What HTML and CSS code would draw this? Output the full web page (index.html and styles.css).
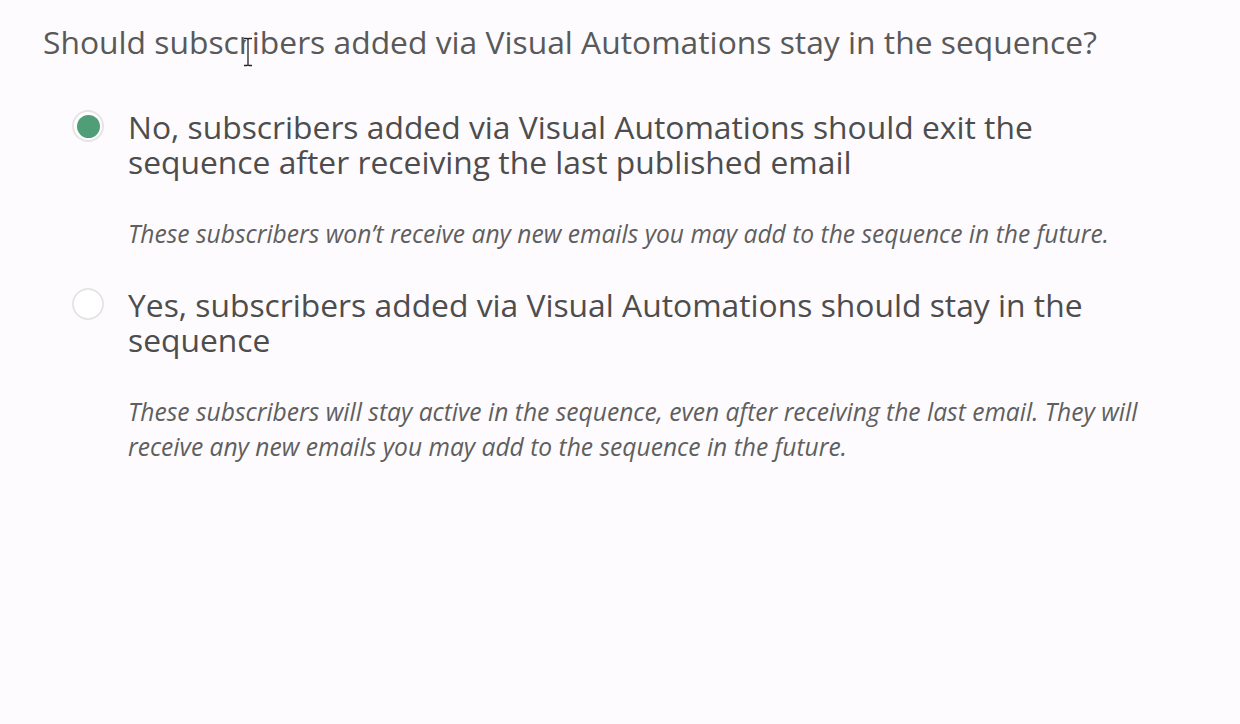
FILE: index.html
```html
<!DOCTYPE html>
<html>
<head>
<meta charset="utf-8">
<link rel="stylesheet" href="styles.css">
</head>
<body>
<div class="page">
  <h1 class="question">Should subscribers added via Visual Automations stay in the sequence?</h1>
  <div class="options">
    <div class="option">
      <span class="radio checked"><span class="dot"></span></span>
      <div class="option-body">
        <div class="label">No, subscribers added via Visual Automations should exit the sequence after receiving the last published email</div>
        <div class="hint">These subscribers won’t receive any new emails you may add to the sequence in the future.</div>
      </div>
    </div>
    <div class="option">
      <span class="radio"></span>
      <div class="option-body">
        <div class="label">Yes, subscribers added via Visual Automations should stay in the sequence</div>
        <div class="hint">These subscribers will stay active in the sequence, even after receiving the last email. They will receive any new emails you may add to the sequence in the future.</div>
      </div>
    </div>
  </div>
</div>
<svg class="cursor" width="12" height="30" viewBox="0 0 12 30">
  <path d="M2 1.5 H5 Q6 1.5 6 3 V27 Q6 28.5 5 28.5 H2 M10 1.5 H7 Q6 1.5 6 3 M6 27 Q6 28.5 7 28.5 H10" fill="none" stroke="#fff" stroke-width="3"/>
  <path d="M2 1.5 H5 Q6 1.5 6 3 V27 Q6 28.5 5 28.5 H2 M10 1.5 H7 Q6 1.5 6 3 M6 27 Q6 28.5 7 28.5 H10" fill="none" stroke="#222" stroke-width="1.3"/>
</svg>
</body>
</html>
```
FILE: styles.css
```css
html, body {
  margin: 0;
  padding: 0;
  background: #fdfbfd;
}
body {
  font-family: "Open Sans", "Noto Sans", sans-serif;
  width: 1240px;
  height: 724px;
  overflow: hidden;
  position: relative;
}
.page {
  padding: 24px 0 0 41px;
}
.question {
  margin: 0 0 0 2px;
  font-size: 31.8px;
  line-height: 35px;
  font-weight: 400;
  color: #595959;
}
.options {
  margin-top: 50px;
  padding-left: 31px;
  display: flex;
  flex-direction: column;
  gap: 36px;
}
.option {
  display: flex;
  align-items: flex-start;
  gap: 24px;
}
.radio {
  flex: none;
  width: 28px;
  height: 28px;
  border: 2px solid #e6e4e6;
  border-radius: 50%;
  background: #fff;
  margin-top: 1px;
  display: flex;
  align-items: center;
  justify-content: center;
}
.radio .dot {
  width: 23px;
  height: 23px;
  border-radius: 50%;
  background: #4f9e78;
}
.option-body {
  width: 1030px;
}
.label {
  font-size: 31.8px;
  line-height: 35px;
  color: #4d4d4d;
}
.hint {
  margin-top: 37px;
  font-size: 24.6px;
  line-height: 35px;
  font-style: italic;
  color: #5f5f5f;
}
.cursor {
  position: absolute;
  left: 242px;
  top: 37px;
}
```
